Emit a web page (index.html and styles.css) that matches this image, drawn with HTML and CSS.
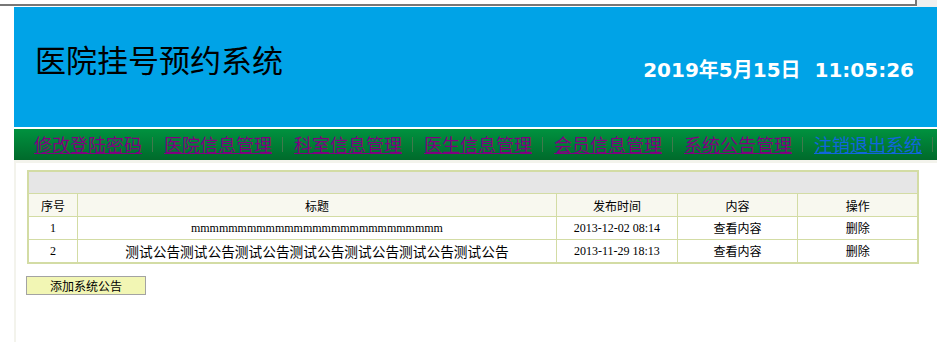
FILE: index.html
```html
<!DOCTYPE html>
<html lang="zh-CN">
<head>
    <meta charset="UTF-8">
    <title>医院挂号预约系统</title>
    <link rel="stylesheet" href="styles.css">
</head>
<body>
    <div class="topline"><div class="topline-box"></div></div>
    <div class="page">
        <div class="header">
            <h1 class="title">医院挂号预约系统</h1>
            <div class="clock">2019年5月15日&nbsp;&nbsp;11:05:26</div>
        </div>
        <ul class="nav">
            <li><a class="visited" href="#">修改登陆密码</a><span class="sep"></span></li>
            <li><a class="visited" href="#">医院信息管理</a><span class="sep"></span></li>
            <li><a class="visited" href="#">科室信息管理</a><span class="sep"></span></li>
            <li><a class="visited" href="#">医生信息管理</a><span class="sep"></span></li>
            <li><a class="visited" href="#">会员信息管理</a><span class="sep"></span></li>
            <li><a class="visited" href="#">系统公告管理</a><span class="sep"></span></li>
            <li><a href="#">注销退出系统</a><span class="sep"></span></li>
        </ul>
        <div class="main">
            <table class="list">
                <tr class="caption-row"><td colspan="5"></td></tr>
                <tr class="head-row">
                    <th class="c-no">序号</th>
                    <th class="c-title">标题</th>
                    <th class="c-time">发布时间</th>
                    <th class="c-content">内容</th>
                    <th class="c-op">操作</th>
                </tr>
                <tr>
                    <td>1</td>
                    <td>mmmmmmmmmmmmmmmmmmmmmmmmmmm</td>
                    <td>2013-12-02 08:14</td>
                    <td><a href="#">查看内容</a></td>
                    <td><a href="#">删除</a></td>
                </tr>
                <tr>
                    <td>2</td>
                    <td class="title-cjk">测试公告测试公告测试公告测试公告测试公告测试公告测试公告</td>
                    <td>2013-11-29 18:13</td>
                    <td><a href="#">查看内容</a></td>
                    <td><a href="#">删除</a></td>
                </tr>
            </table>
            <button class="add-btn">添加系统公告</button>
        </div>
    </div>
</body>
</html>
```

FILE: styles.css
```css
body {
    margin: 0;
    background-color: #ffffff;
    font-family: "Noto Sans CJK SC", sans-serif;
}
.topline {
    height: 7px;
    display: flex;
    background: linear-gradient(to right, #ffffff 917px, #f0f0f0 917px);
}
.topline-box {
    width: 915px;
    height: 4px;
    border-right: 2px solid #777777;
    border-bottom: 2px solid #777777;
    background-color: #ffffff;
}
.page {
    margin-left: 14px;
}
.header {
    height: 120px;
    background-color: #00a3e7;
    display: flex;
    justify-content: space-between;
    align-items: flex-start;
    margin-bottom: 2px;
}
.title {
    margin: 30px 0 0 21px;
    font-size: 31px;
    font-weight: normal;
    line-height: 44px;
    color: #000000;
}
.clock {
    margin: 51px 23px 0 0;
    font-family: "DejaVu Sans", "Noto Sans CJK SC", sans-serif;
    font-size: 20px;
    font-weight: bold;
    line-height: 24px;
    color: #ffffff;
    white-space: nowrap;
}
.nav {
    list-style: none;
    margin: 0;
    padding: 0 0 0 9px;
    height: 31px;
    background: linear-gradient(#00923f, #006a2b);
    display: flex;
    align-items: center;
    overflow: hidden;
    white-space: nowrap;
}
.nav li {
    display: flex;
    align-items: center;
    flex-shrink: 0;
    padding-left: 11px;
}
.nav a {
    font-size: 18px;
    line-height: 31px;
    color: #1166dd;
    text-decoration: underline;
    text-underline-offset: 1px;
}
.nav a.visited {
    color: #800080;
}
.sep {
    display: inline-block;
    width: 1px;
    height: 15px;
    margin-left: 10px;
    background-color: #3f7a4c;
}
.main {
    border-top: 3px solid #f3f3ec;
    border-left: 2px solid #f3f3ec;
    height: 180px;
    padding: 7px 0 0 11px;
}
.list {
    width: 892px;
    border-collapse: collapse;
    border: 2px solid #d3dca4;
    font-family: "Liberation Serif", "Noto Sans CJK SC", serif;
    font-size: 12px;
    color: #000000;
}
.list td,
.list th {
    height: 22px;
    padding: 0;
    border: 1px solid #d3dca4;
    text-align: center;
    font-weight: normal;
}
.list .caption-row td {
    height: 21px;
    background-color: #e6e6e6;
}
.head-row th {
    background-color: #f8f8ef;
    font-family: "Noto Sans CJK SC", sans-serif;
}
.c-no { width: 48px; }
.c-title { width: 479px; }
.c-time { width: 120px; }
.c-content { width: 120px; }
.c-op { width: 119px; }
.list td.title-cjk {
    font-size: 13.7px;
}
.list a {
    color: #000000;
    text-decoration: none;
    font-family: "Noto Sans CJK SC", sans-serif;
}
.add-btn {
    display: block;
    margin: 12px 0 0 -1px;
    width: 120px;
    height: 19px;
    padding: 0;
    border: 1px solid #a3a3a3;
    background-color: #f2f6b4;
    font-family: "Noto Sans CJK SC", sans-serif;
    font-size: 12px;
    line-height: 16px;
    color: #000000;
}
```
